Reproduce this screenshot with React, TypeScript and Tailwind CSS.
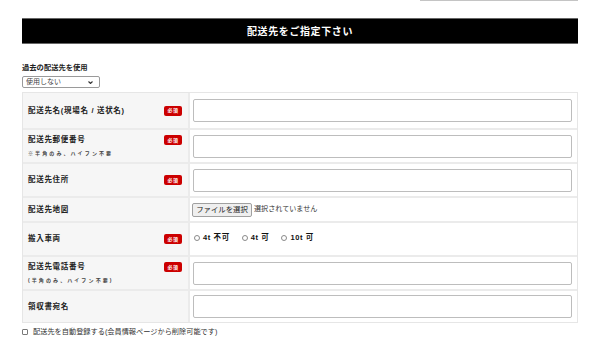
import { useState } from 'react';

const font = { fontFamily: '"Liberation Sans", "Noto Sans CJK JP", sans-serif' };

function Badge() {
  return (
    <span className="flex h-[10px] w-[18px] shrink-0 items-center justify-center rounded-[2px] bg-[#cc0000] text-[5px] font-bold leading-none tracking-[0.5px] text-white">
      必須
    </span>
  );
}

function Label({ title, note, required }: { title: string; note?: string; required?: boolean }) {
  return (
    <div className="flex w-[167px] shrink-0 items-center border-r-2 border-[#ebebeb] bg-[#f6f6f6] pl-[5px] pr-[6px]">
      <div className="flex w-full items-start justify-between">
        <div>
          <div className="text-[7.5px] font-bold leading-[10px] tracking-[0.7px] text-[#222]">{title}</div>
          {note && (
            <div className="mt-[5px] text-[5px] font-bold leading-[7px] tracking-[2.1px] text-[#444]">{note}</div>
          )}
        </div>
        {required && <Badge />}
      </div>
    </div>
  );
}

function TextField() {
  return (
    <input
      type="text"
      className="h-[23px] w-full rounded-[2px] border border-[#bdbdbd] bg-white outline-none"
    />
  );
}

export default function App() {
  const [car, setCar] = useState('');
  const [autoSave, setAutoSave] = useState(false);

  return (
    <div style={font} className="h-[344px] w-[600px] overflow-hidden bg-white px-[22px] text-[#333]">
      {/* top input edge */}
      <div className="flex justify-end">
        <div className="h-px w-[158px] bg-[#c4c4c4]" />
      </div>

      {/* Title bar */}
      <div className="mt-[17px] flex h-[26px] items-center justify-center border-y border-[#666] bg-black">
        <h2 className="text-[10px] font-bold tracking-[0.6px] text-white">配送先をご指定下さい</h2>
      </div>

      {/* Past addresses */}
      <div className="mt-[19px] h-[9px] text-[7.3px] font-bold leading-[9px] text-[#222]">過去の配送先を使用</div>
      <div className="relative mt-[4px] h-[12px] w-[78px]">
        <select className="block h-[12px] w-full appearance-none rounded-[2px] border border-[#9a9a9a] bg-white py-0 pl-[3px] text-[7px] leading-[10px] text-[#444] outline-none">
          <option>使用しない</option>
        </select>
        <svg className="pointer-events-none absolute right-[7px] top-[4.5px]" width="5" height="3" viewBox="0 0 5 3">
          <path d="M0.5 0.5 L2.5 2.5 L4.5 0.5" fill="none" stroke="#333" strokeWidth="1.1" />
        </svg>
      </div>

      {/* Form table */}
      <div className="mt-[4px] border border-[#e6e6e6]">
        <div className="flex h-[35px]">
          <Label title="配送先名(現場名 / 送状名)" required />
          <div className="flex flex-1 items-center pl-[3px] pr-[5px]">
            <TextField />
          </div>
        </div>

        <div className="flex h-[34px] border-t-2 border-[#ebebeb]">
          <Label title="配送先郵便番号" note="※半角のみ、ハイフン不要" required />
          <div className="flex flex-1 items-center pl-[3px] pr-[5px]">
            <TextField />
          </div>
        </div>

        <div className="flex h-[34px] border-t-2 border-[#ebebeb]">
          <Label title="配送先住所" required />
          <div className="flex flex-1 items-center pl-[3px] pr-[5px]">
            <TextField />
          </div>
        </div>

        <div className="flex h-[25px] border-t-2 border-[#ebebeb]">
          <Label title="配送先地図" />
          <div className="flex flex-1 items-center gap-[2px] pl-[2px] pr-[5px]">
            <button className="flex h-[14px] w-[60px] items-center justify-center rounded-[2px] border border-[#a0a0a0] bg-[#efefef] text-[7.4px] leading-none text-[#222]">
              ファイルを選択
            </button>
            <span className="text-[7.1px] text-[#333]">選択されていません</span>
          </div>
        </div>

        <div className="flex h-[34px] border-t-2 border-[#ebebeb]">
          <Label title="搬入車両" required />
          <div className="flex flex-1 items-center pb-[2px] pl-[4px] pr-[5px]">
            {['4t 不可', '4t 可', '10t 可'].map((v) => (
              <label key={v} className="mr-[12px] flex items-center gap-[3px] text-[7.5px] font-bold tracking-[0.6px] text-[#111]">
                <input
                  type="radio"
                  name="car"
                  checked={car === v}
                  onChange={() => setCar(v)}
                  className="h-[6px] w-[6px] appearance-none rounded-full border border-[#8a8a8a] bg-white"
                />
                {v}
              </label>
            ))}
          </div>
        </div>

        <div className="flex h-[34px] border-t-2 border-[#ebebeb]">
          <Label title="配送先電話番号" note="(半角のみ、ハイフン不要)" required />
          <div className="flex flex-1 items-center pl-[3px] pr-[5px]">
            <TextField />
          </div>
        </div>

        <div className="flex h-[33px] border-t-2 border-[#ebebeb]">
          <Label title="領収書宛名" />
          <div className="flex flex-1 items-center pl-[3px] pr-[5px]">
            <TextField />
          </div>
        </div>
      </div>

      {/* Auto save */}
      <label className="mt-[4px] flex h-[10px] items-center gap-[5px] text-[7.2px] text-[#333]">
        <input
          type="checkbox"
          checked={autoSave}
          onChange={() => setAutoSave(!autoSave)}
          className="h-[6px] w-[6px] appearance-none rounded-[1px] border border-[#7a7a7a] bg-white"
        />
        配送先を自動登録する(会員情報ページから削除可能です)
      </label>
    </div>
  );
}
